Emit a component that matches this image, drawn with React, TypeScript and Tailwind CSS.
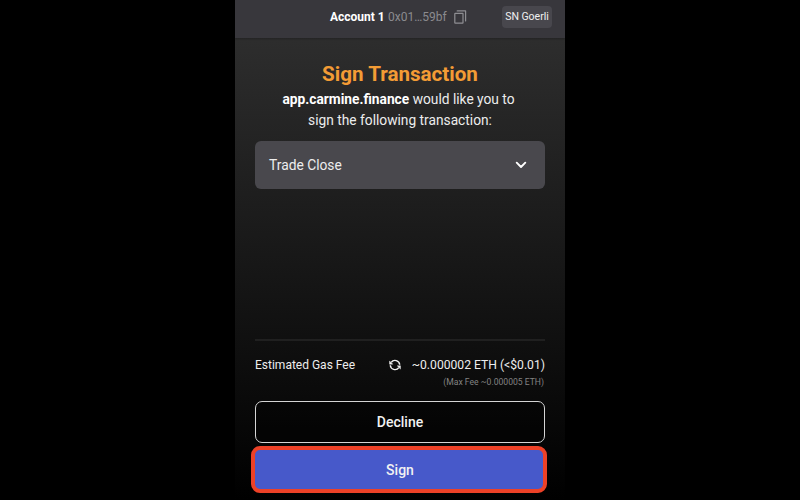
function CopyIcon() {
  return (
    <svg width="13" height="14" viewBox="0 0 13 14" fill="none" stroke="#8e8e92" strokeWidth="1.2" strokeLinejoin="round">
      <rect x="0.8" y="3.3" width="8.2" height="9.8" rx="0.4" />
      <path d="M3.2 0.9h8.4v10" strokeLinecap="round" />
    </svg>
  )
}

function RefreshIcon() {
  return (
    <svg width="12" height="12" viewBox="0 0 12 12" fill="none" stroke="#f2f2f2" strokeWidth="1.4">
      <path d="M2.2 3.4A4.7 4.7 0 0 1 10.7 5.8" />
      <path d="M9.8 8.6A4.7 4.7 0 0 1 1.3 6.2" />
      <path d="M0.5 1.9v3.3h3.3z" fill="#f2f2f2" strokeWidth="0.4" strokeLinejoin="round" />
      <path d="M11.5 10.1V6.8H8.2z" fill="#f2f2f2" strokeWidth="0.4" strokeLinejoin="round" />
    </svg>
  )
}

function Header() {
  return (
    <header className="h-[38px] shrink-0 bg-[#38373c] flex items-start shadow-[0_1px_2px_rgba(0,0,0,0.25)]">
      <div className="flex items-center h-[34px] ml-[95px] text-[12px] whitespace-nowrap">
        <span className="font-bold text-white w-[58px]">Account 1</span>
        <span className="text-[#8b8b8f] w-[66px]">0x01…59bf</span>
        <CopyIcon />
      </div>
      <div className="ml-auto mr-[13px] mt-[6px] w-[50px] h-[22px] rounded bg-[#48474d] text-[#f0f0f0] text-[10.5px] flex items-center justify-center whitespace-nowrap">
        SN Goerli
      </div>
    </header>
  )
}

export default function App() {
  return (
    <div className="w-[800px] h-[500px] bg-black flex justify-center overflow-hidden font-['Roboto',sans-serif]">
      <main className="w-[330px] h-[500px] flex flex-col bg-linear-to-b/srgb from-[#313131] to-black">
        <Header />

        <section className="px-[20px] pt-[23px] text-center">
          <h1 className="text-[20.6px] leading-[26px] font-bold text-[#f39c35]">Sign Transaction</h1>
          <p className="pt-[2px] pr-[3px] text-[13.75px] leading-[21px] text-[#ececec]">
            <b className="text-white">app.carmine.finance</b> would like you to
          </p>
          <p className="text-[13.75px] leading-[21px] text-[#ececec]">sign the following transaction:</p>
          <button className="mt-[10px] w-full h-[48px] rounded-md bg-[#49484d] pl-[14px] pr-[18px] flex items-center justify-between text-[13.8px] text-[#ededed]">
            Trade Close
            <svg width="12" height="8" viewBox="0 0 12 8" fill="none" stroke="white" strokeWidth="1.9" strokeLinecap="round" strokeLinejoin="round">
              <path d="M1.7 1.7L6 6l4.3-4.3" />
            </svg>
          </button>
        </section>

        <section className="mt-auto px-[20px]">
          <div className="h-[2px] bg-[#202020]" />
          <div className="mt-[14px] h-[20px] flex items-center text-[12px] text-[#ededed] whitespace-nowrap">
            <span>Estimated Gas Fee</span>
            <span className="ml-auto mr-[10.5px]">
              <RefreshIcon />
            </span>
            <span className="text-[12.15px]">~0.000002 ETH (&lt;$0.01)</span>
          </div>
          <div className="h-[14px] pr-px text-right text-[8.6px] leading-[14px] text-[#828282]">(Max Fee ~0.000005 ETH)</div>
          <button className="mt-[12px] w-full h-[42px] block rounded-[7px] border border-[#d5d5d5] bg-black/30 text-[14px] font-medium text-[#f2f2f2]">
            Decline
          </button>
        </section>
        <div className="mt-[3px] mb-[7px] ml-[16px] mr-[18px] h-[47px] shrink-0">
          <button className="w-full h-full rounded-[9px] border-4 border-[#ed4127] bg-[#4759ca] pl-[2px] pt-px text-[14px] font-medium text-[#f2f2f2]">
            Sign
          </button>
        </div>
      </main>
    </div>
  )
}
